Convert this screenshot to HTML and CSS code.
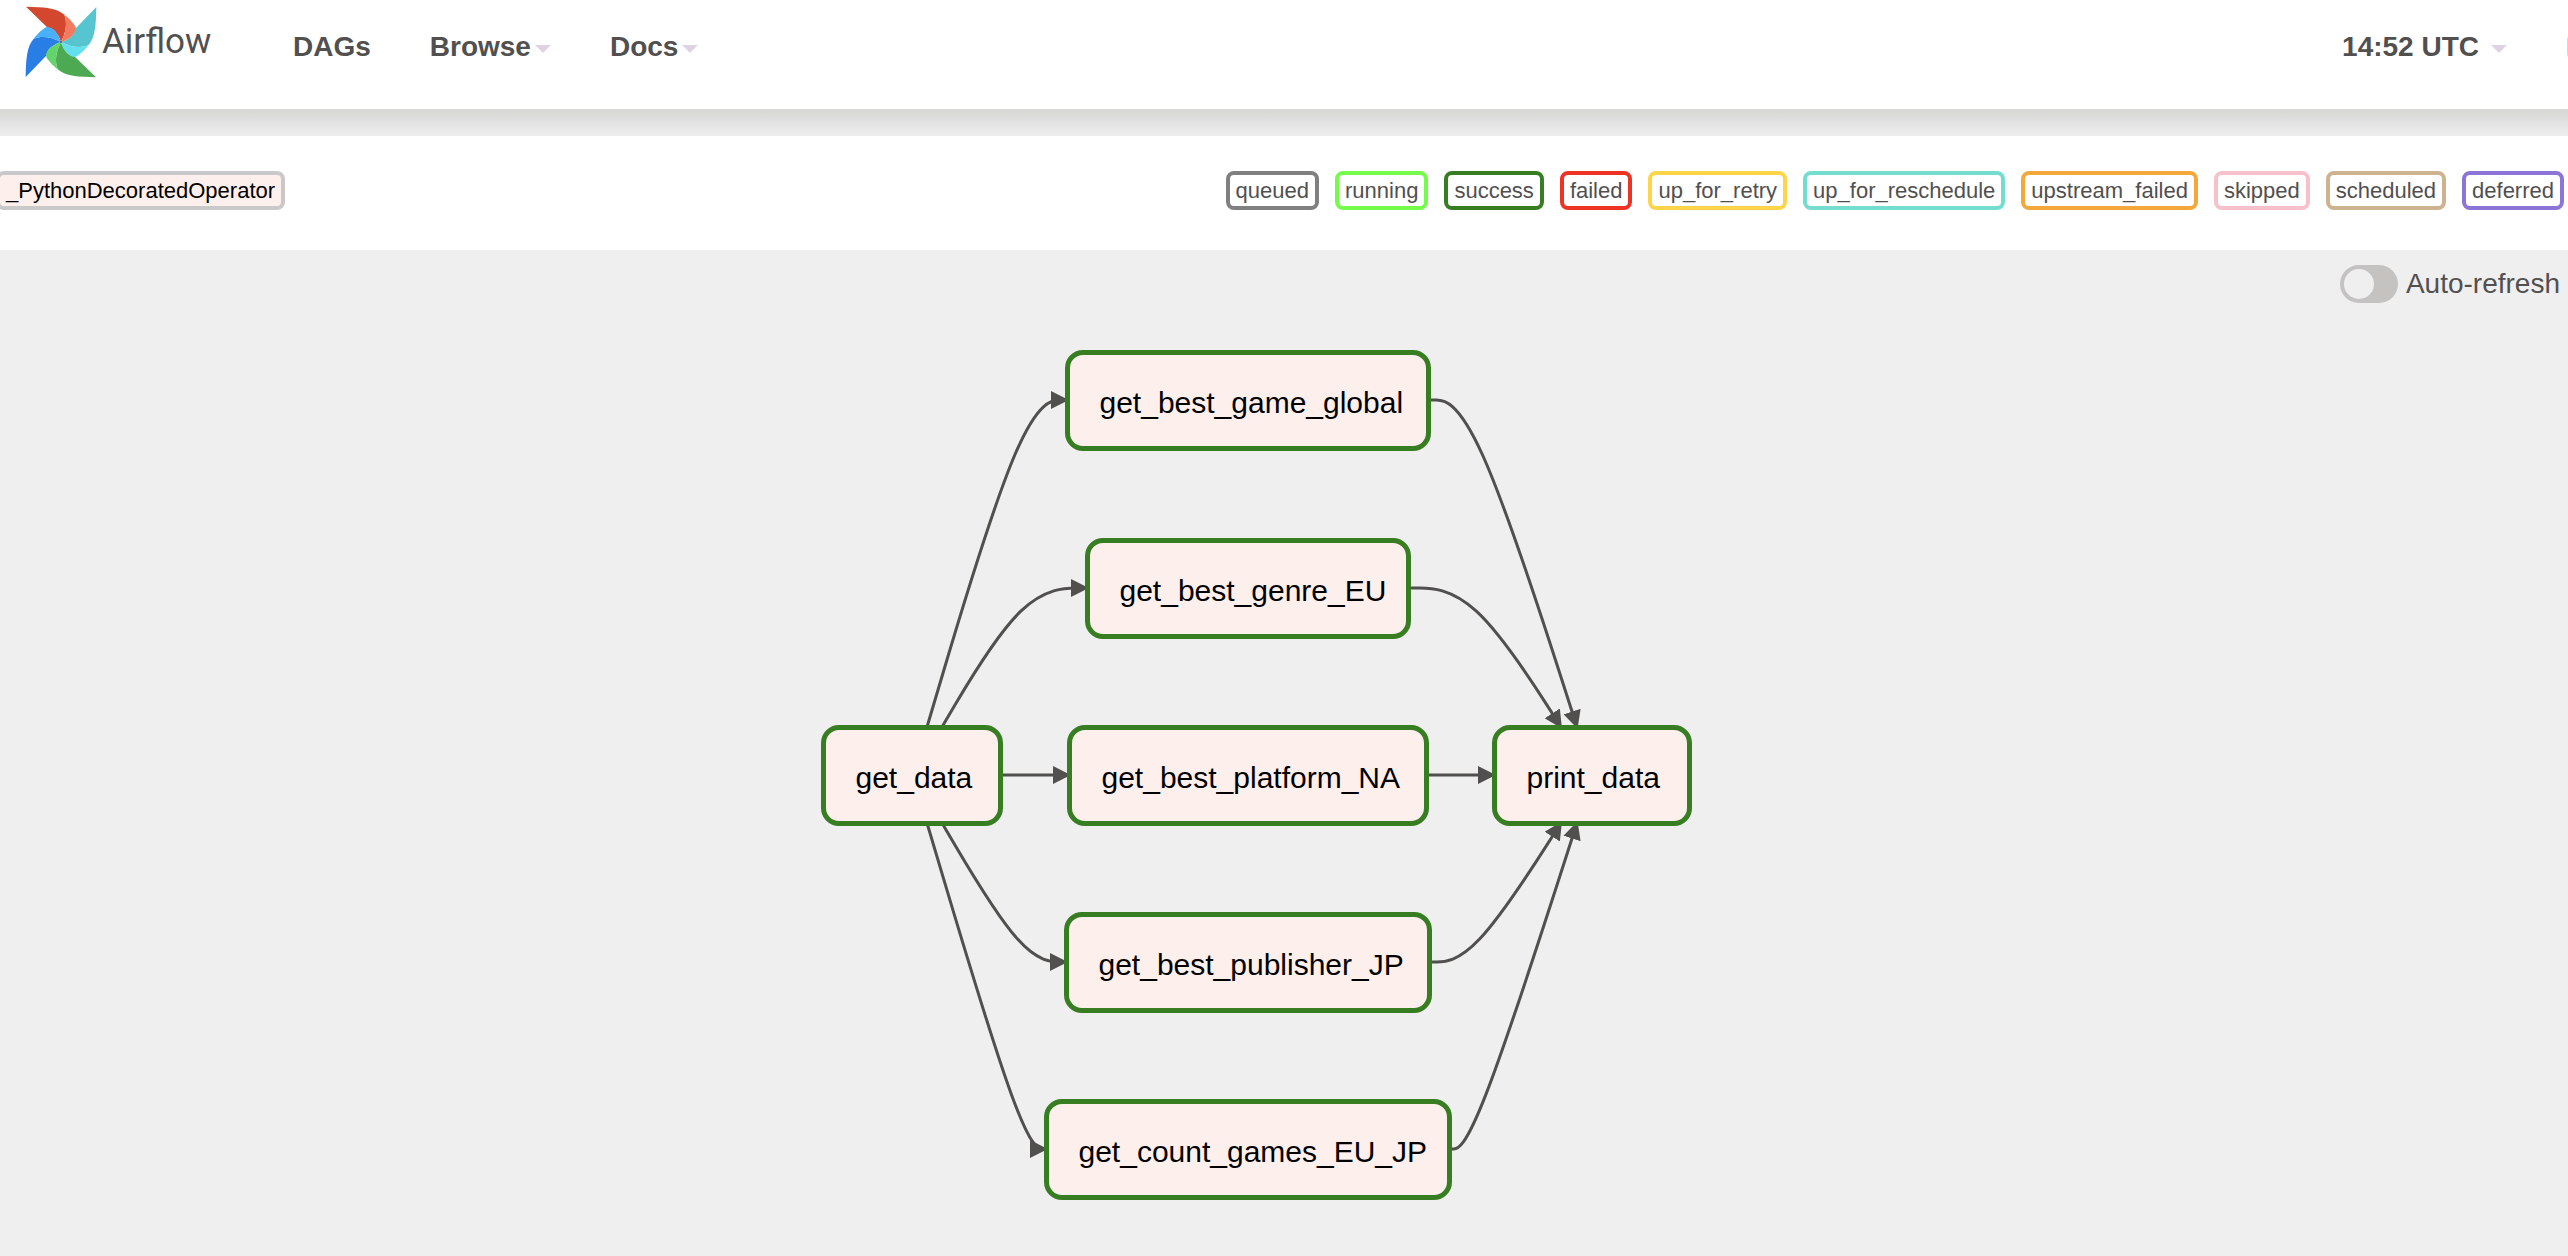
FILE: index.html
```html
<!DOCTYPE html>
<html lang="en">
<head>
<meta charset="utf-8">
<meta name="viewport" content="width=device-width, initial-scale=1">
<title>Airflow</title>
<link rel="stylesheet" href="styles.css">
</head>
<body>
<header class="navbar">
  <a class="brand" href="#">
    <svg class="brand-logo" viewBox="75 17 216 216" aria-hidden="true">
      <defs>
        <path id="blade" d="M78 19L143 82C160 82 175 100 183 125C197 98 203 70 193 43C170 22 130 20 78 19Z"/>
        <path id="fold" d="M193 43C205 52 229 75 228 85C226 102 208 117 183 125C197 98 203 70 193 43Z"/>
      </defs>
      <use href="#blade" fill="#d3472e"/>
      <use href="#blade" fill="#56c5d0" transform="rotate(90 183 125)"/>
      <use href="#blade" fill="#4eaa52" transform="rotate(180 183 125)"/>
      <use href="#blade" fill="#297ee6" transform="rotate(270 183 125)"/>
      <use href="#fold" fill="#f27c61"/>
      <use href="#fold" fill="#63e0ee" transform="rotate(90 183 125)"/>
      <use href="#fold" fill="#62d46b" transform="rotate(180 183 125)"/>
      <use href="#fold" fill="#49b1fa" transform="rotate(270 183 125)"/>
      <circle cx="183" cy="125" r="3" fill="#51504f"/>
    </svg>
    <span class="brand-name">Airflow</span>
  </a>
  <nav class="menu">
    <a class="menu-item" href="#">DAGs</a>
    <button class="menu-item" type="button">Browse<span class="caret"></span></button>
    <button class="menu-item" type="button">Docs<span class="caret"></span></button>
  </nav>
  <div class="menu-right">
    <button class="menu-item clock" type="button">14:52 UTC<span class="caret"></span></button>
    <button class="avatar" type="button" aria-label="User"></button>
  </div>
</header>
<div class="navbar-shade"></div>
<section class="legend">
  <span class="tag operator">_PythonDecoratedOperator</span>
  <div class="states">
    <span class="tag queued">queued</span>
    <span class="tag running">running</span>
    <span class="tag success">success</span>
    <span class="tag failed">failed</span>
    <span class="tag up-for-retry">up_for_retry</span>
    <span class="tag up-for-reschedule">up_for_reschedule</span>
    <span class="tag upstream-failed">upstream_failed</span>
    <span class="tag skipped">skipped</span>
    <span class="tag scheduled">scheduled</span>
    <span class="tag deferred">deferred</span>
  </div>
</section>
<main class="graph-panel">
  <label class="refresh"><input class="switch" type="checkbox">Auto-refresh</label>
  <div class="graph">
    <svg class="edges" viewBox="0 0 871 850" aria-hidden="true">
      <defs>
        <marker id="arrow" viewBox="0 0 10 10" refX="9" refY="5" markerWidth="18" markerHeight="18" markerUnits="userSpaceOnUse" orient="auto">
          <path d="M0 0L10 5L0 10Z"/>
        </marker>
      </defs>
      <g id="edge-paths"></g>
    </svg>
    <div class="node get-data">get_data</div>
    <div class="node game">get_best_game_global</div>
    <div class="node genre">get_best_genre_EU</div>
    <div class="node platform">get_best_platform_NA</div>
    <div class="node publisher">get_best_publisher_JP</div>
    <div class="node count">get_count_games_EU_JP</div>
    <div class="node print">print_data</div>
  </div>
</main>
<script src="graph.js"></script>
</body>
</html>
```
FILE: styles.css
```css
* { box-sizing: border-box; }

body {
  margin: 0;
  min-height: 100vh;
  display: flex;
  flex-direction: column;
  overflow-x: hidden;
  background: #fff;
  color: #51504f;
  font-family: "Liberation Sans", Arial, sans-serif;
  font-size: 28px;
  line-height: 32px;
}

button {
  padding: 0;
  border: 0;
  background: none;
  color: inherit;
  font: inherit;
  cursor: pointer;
}

a { color: inherit; text-decoration: none; }

.navbar {
  display: flex;
  align-items: flex-start;
  height: 109px;
  padding-left: 25px;
  overflow: hidden;
}

.brand {
  display: flex;
  align-items: center;
  gap: 5px;
  width: 268px;
  padding-top: 6px;
}

.brand-logo { width: 72px; height: 72px; }

.brand-name {
  font-family: Roboto, sans-serif;
  font-size: 35px;
}

.menu { display: flex; gap: 59px; padding-top: 31px; }

.menu-item {
  display: flex;
  align-items: center;
  gap: 4px;
  font-weight: 700;
  white-space: nowrap;
}

.caret {
  margin-top: 4px;
  border: 8px solid transparent;
  border-top-color: #dfd3e3;
  border-bottom: 0;
}

.menu-right {
  display: flex;
  flex: none;
  gap: 60px;
  margin-left: auto;
  margin-right: -27px;
  padding-top: 31px;
}

.clock { gap: 12px; }

.avatar {
  width: 28px;
  height: 32px;
  border-radius: 10px;
  background: #c5dcf2;
}

.navbar-shade {
  height: 27px;
  background: linear-gradient(#d6d6d4, #e2e2e2 50%, #eee);
}

.legend {
  display: flex;
  justify-content: space-between;
  align-items: flex-start;
  height: 114px;
  padding: 35px 4px 0 0;
  font-size: 22px;
}

.states { display: flex; gap: 16px; }

.tag {
  padding: 0 6px;
  border: 4px solid;
  border-radius: 8px;
  line-height: 31px;
  white-space: nowrap;
}

.operator {
  margin-left: -4px;
  border-color: #c9c9c9;
  background: #fdefeb;
  color: #000;
}

.queued { border-color: #808080; }
.running { border-color: #75fb4c; }
.success { border-color: #377e22; }
.failed { border-color: #ee3224; }
.up-for-retry { border-color: #fed549; }
.up-for-reschedule { border-color: #74ddd0; }
.upstream-failed { border-color: #f4a83b; }
.skipped { border-color: #f6c1cb; }
.scheduled { border-color: #cdb38f; }
.deferred { border-color: #8d74d7; }

.graph-panel {
  flex: 1;
  padding: 15px 8px 54px;
  background: #efefef;
}

.refresh {
  display: flex;
  justify-content: flex-end;
  align-items: center;
  gap: 8px;
  height: 38px;
}

.switch {
  appearance: none;
  display: flex;
  align-items: center;
  width: 58px;
  height: 38px;
  margin: 0;
  padding: 4px;
  border-radius: 19px;
  background: #c4c3c1;
  cursor: pointer;
}

.switch::before {
  content: "";
  width: 30px;
  height: 30px;
  border-radius: 50%;
  background: #efefef;
}

.switch:checked::before { margin-left: auto; }

.graph {
  position: relative;
  left: -28px;
  width: 871px;
  height: 850px;
  margin: 47px auto 0;
}

.edges {
  display: block;
  width: 100%;
  height: 100%;
  fill: none;
  stroke: #51504f;
  stroke-width: 3;
}

.edges marker path { fill: #51504f; stroke: none; }

.node {
  position: absolute;
  height: 101px;
  padding: 12px 0 0 30px;
  border: 5px solid #377e22;
  border-radius: 18px;
  background: #fdefeb;
  color: #000;
  font-size: 30px;
  line-height: 72px;
  white-space: nowrap;
}

.get-data { left: 0; top: 375px; width: 182px; }
.game { left: 244px; top: 0; width: 366px; }
.genre { left: 264px; top: 188px; width: 326px; }
.platform { left: 246px; top: 375px; width: 362px; }
.publisher { left: 243px; top: 562px; width: 368px; }
.count { left: 223px; top: 749px; width: 408px; }
.print { left: 671px; top: 375px; width: 200px; }
```
FILE: graph.js
```js
// Smooth (B-spline) edge through a start, a bend and an end point.
function spline(a, b, c) {
  const mix = (...w) => [0, 1].map(i =>
    (w[0] * a[i] + w[1] * b[i] + w[2] * c[i]) / (w[0] + w[1] + w[2])).join(" ");
  return `M${mix(1, 0, 0)}L${mix(5, 1, 0)}` +
    `C${mix(2, 1, 0)} ${mix(1, 2, 0)} ${mix(1, 4, 1)}` +
    `C${mix(0, 2, 1)} ${mix(0, 1, 2)} ${mix(0, 1, 5)}L${mix(0, 0, 1)}`;
}

const edges = [
  [[106, 377], [203, 50], [246, 50]],
  [[121, 377], [203, 238], [266, 238]],
  [[180, 425], [203, 425], [248, 425]],
  [[121, 473], [203, 612], [245, 612]],
  [[106, 473], [203, 799], [225, 799]],
  [[608, 50], [651, 50], [756, 377]],
  [[588, 238], [651, 238], [740, 377]],
  [[606, 425], [651, 425], [673, 425]],
  [[609, 612], [651, 612], [740, 473]],
  [[629, 799], [651, 799], [756, 473]]
];

const group = document.getElementById("edge-paths");
for (const points of edges) {
  const path = document.createElementNS("http://www.w3.org/2000/svg", "path");
  path.setAttribute("d", spline(...points));
  path.setAttribute("marker-end", "url(#arrow)");
  group.append(path);
}
```
